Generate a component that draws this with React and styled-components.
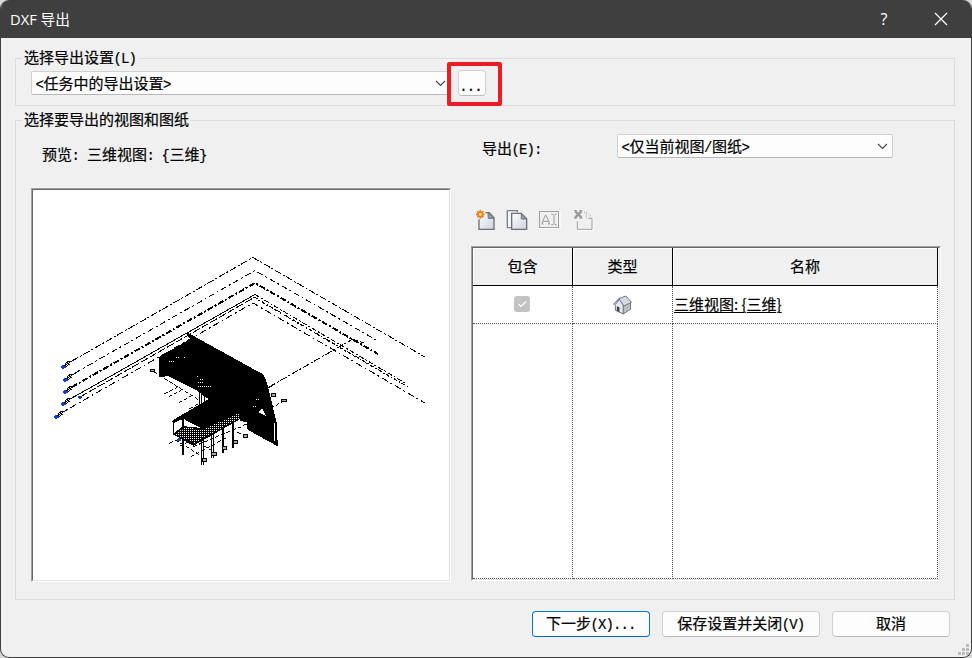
import React from 'react';
import styled, { createGlobalStyle } from 'styled-components';

const GlobalStyle = createGlobalStyle`
  *, *::before, *::after { box-sizing: border-box; }
  body { margin: 0; background: #d8d8d8; overflow: hidden; }
`;

const Window = styled.div`
  width: 972px;
  height: 658px;
  display: flex;
  flex-direction: column;
  position: relative;
  background: #f0f0f0;
  border: 1px solid #3f3f3f;
  border-top: 0;
  border-radius: 9px;
  overflow: hidden;
  color: #000;
  font: 15px/17px 'Noto Sans CJK SC', sans-serif;
  -webkit-text-stroke: 0.2px;
  white-space: pre;
`;

const TitleBar = styled.header`
  flex: none;
  height: 38px;
  display: flex;
  align-items: center;
  padding: 0 23px 0 9px;
  background: #3f3f3f;
  color: #fff;
  font: 14px/20px 'Open Sans', 'Noto Sans CJK SC', sans-serif;
  -webkit-text-stroke: 0;
`;

const Title = styled.span`
  flex: 1;
  padding-bottom: 1px;
  font-size: 14.7px;
`;

const TitleButton = styled.button`
  display: flex;
  justify-content: center;
  width: 14px;
  margin-left: ${p => p.$gap || 0}px;
  padding: 0;
  border: 0;
  background: none;
  color: #fff;
  font: 16px/20px 'Open Sans', sans-serif;
`;

const Content = styled.main`
  display: flex;
  flex-direction: column;
  padding: 12px 16px 0 14px;
`;

const Group = styled.fieldset`
  width: 940px;
  height: ${p => p.$height}px;
  min-width: 0;
  margin: 0 0 ${p => p.$gap}px;
  padding: 0 0 0 15px;
  border: 1px solid #dcdcdc;
`;

const Legend = styled.legend`
  height: 17px;
  margin-left: -9px;
  padding: 0 2px;
  line-height: 14px;
`;

const Ascii = styled.span`
  margin: 0 0.5px 0 -0.5px;
  font-family: 'Liberation Mono', monospace;
  font-size: 14px;
  letter-spacing: -0.9px;
  line-height: 1;
`;

const SettingRow = styled.div`
  display: flex;
  align-items: flex-start;
  padding-top: 4px;
`;

const Select = styled.div`
  width: ${p => p.$width}px;
  height: 24px;
  display: flex;
  align-items: center;
  justify-content: space-between;
  padding: 0 4px 0 4px;
  background: #fdfdfd;
  border: 1px solid #d0d0d0;
  border-bottom-color: #b8b8b8;
  border-radius: 2px;
`;

const Highlight = styled.div`
  position: relative;
  margin: 0 0 0 7px;
  &::after {
    content: '';
    position: absolute;
    left: -11px;
    top: -9px;
    width: 55px;
    height: 44px;
    border: 4px solid #ed1c24;
    border-radius: 2px;
    background: linear-gradient(#f0f0f0, #f0f0f0) 0 0 / 3px 100% no-repeat;
  }
`;

const Button = styled.button`
  width: ${p => p.$width}px;
  height: 26px;
  display: flex;
  align-items: center;
  justify-content: center;
  padding: 0 0 3px;
  background: #fdfdfd;
  border: 1px solid ${p => (p.$primary ? '#0078d4' : '#d0d0d0')};
  border-bottom-color: ${p => (p.$primary ? '#0067c0' : '#bcbcbc')};
  border-radius: 4px;
  color: #000;
  font: inherit;
  white-space: pre;
`;

const MoreButton = styled(Button)`
  margin-top: -1px;
  padding: 4px 2px 0 0;
`;

const Columns = styled.div`
  display: flex;
  gap: 20px;
`;

const PreviewPane = styled.section`
  width: 420px;
`;

const PreviewLabel = styled.div`
  height: 59px;
  padding: 16px 0 0 11px;
`;

const Sunken = styled.div`
  border: 1px solid;
  border-color: #a0a0a0 #fff #fff #a0a0a0;
  background: #fff;
`;

const SunkenInner = styled.div`
  height: ${p => p.$height}px;
  border: 1px solid;
  border-color: #696969 #e3e3e3 #e3e3e3 #696969;
  svg { display: block; }
`;

const ViewPane = styled.section`
  width: 470px;
`;

const ExportRow = styled.div`
  display: flex;
  align-items: flex-start;
  height: 79px;
  padding: 5px 0 0 11px;
`;

const ExportLabel = styled.label`
  width: 135px;
  padding-top: 5px;
`;

const Toolbar = styled.div`
  display: flex;
  gap: 10px;
  height: 38px;
  padding-left: 4px;
`;

const Grid = styled.div`
  display: grid;
  grid-template-columns: 100px 100px 265px;
  grid-template-rows: 38px 38px 255px;
`;

const HeaderCell = styled.div`
  display: flex;
  align-items: center;
  justify-content: center;
  padding-bottom: 2px;
  background: #f0f0f0;
  border-right: 1px solid #000;
  border-bottom: 1px solid #000;
  box-shadow: inset 1px 1px #fff;
`;

const Cell = styled.div`
  display: flex;
  align-items: center;
  justify-content: ${p => (p.$start ? 'flex-start' : 'center')};
  padding-left: ${p => (p.$start ? 1 : 0)}px;
  border-right: 1px dotted #555;
  border-bottom: 1px dotted #555;
`;

const ViewName = styled.span`
  padding-bottom: 2px;
  text-decoration: underline;
  text-decoration-thickness: 1px;
  text-underline-offset: 2px;
`;

const Checkbox = styled.span`
  width: 16px;
  height: 16px;
  margin-right: 1px;
  margin-bottom: 1px;
  border-radius: 3px;
  background: #c3c3c3;
  svg { display: block; }
`;

const Footer = styled.footer`
  display: flex;
  gap: 12px;
  padding-left: 517px;
`;

const Grip = styled.svg`
  position: absolute;
  right: 1px;
  bottom: 1px;
`;

// Half-width runs are set in a monospaced face, half the width of a Han character.
const Mixed = ({ children }) => (
  <span>
    {children.split(/([\x20-\x7e]+)/).map((part, i) =>
      i % 2 ? <Ascii key={i}>{part}</Ascii> : part
    )}
  </span>
);

const Chevron = () => (
  <svg width="11" height="7" viewBox="0 0 11 7" fill="none" stroke="#444" strokeWidth="1.1">
    <path d="M1 1l4.5 4.5L10 1" />
  </svg>
);

const ToolIcon = ({ x, children }) => (
  <svg width="22" height="23" viewBox={`${x} 39 66 69`} overflow="visible" fill="none">
    {children}
  </svg>
);

const NewIcon = () => (
  <ToolIcon x={45}>
    <defs>
      <linearGradient id="sheet" x2="1" y2="1">
        <stop stopColor="#fff" />
        <stop offset="1" stopColor="#ccd1dc" />
      </linearGradient>
    </defs>
    <path d="M57 73V103H102V68L88 53H76" fill="url(#sheet)" stroke="#6b7079" strokeWidth="4" />
    <path d="M84 53L102 70H85Z" fill="#9da3ae" stroke="#6b7079" strokeWidth="3" />
    <g stroke="#ed7c1b" strokeWidth="5">
      <path d="M61 45V71M48 58H74M52 49L70 67M70 49L52 67" />
      <circle cx="61" cy="58" r="7" fill="#fff1b0" />
    </g>
  </ToolIcon>
);

const CopyIcon = () => (
  <ToolIcon x={141}>
    <path d="M172 52V47H142V98H155" fill="#f2f4f7" stroke="#7b8088" strokeWidth="4" />
    <path d="M155 55H184L200 71V103H155Z" fill="url(#sheet)" stroke="#6b7079" strokeWidth="4" />
    <path d="M184 56V72H200Z" fill="#9da3ae" stroke="#6b7079" strokeWidth="3" />
  </ToolIcon>
);

const RenameIcon = () => (
  <ToolIcon x={237}>
    <path d="M240 100H300V51" stroke="#fff" strokeWidth="3" />
    <rect x="238.5" y="49.500" width="57" height="48" stroke="#a0a0a0" strokeWidth="3" />
    <path d="M247 87V81L256 61H258L267 81V87M250 79H264M244 87H250M264 87H270" stroke="#999" strokeWidth="3" />
    <path d="M274 58H280M284 58H290M282 60V87M274 89H280M284 89H290" stroke="#999" strokeWidth="3" />
  </ToolIcon>
);

const DeleteIcon = () => (
  <ToolIcon x={333}>
    <path d="M354 106H399V72" stroke="#fff" strokeWidth="3" />
    <path d="M352 79V103H396V70H385" stroke="#a0a0a0" strokeWidth="3" />
    <path d="M372 52H384M379 56V70M386 58L394 65" stroke="#a0a0a0" strokeWidth="3" strokeDasharray="3 3" />
    <path d="M346 49L364 67M364 49L346 67" stroke="#999" strokeWidth="7" />
    <path d="M342 47H350M359 47H367M342 69H350M359 69H367" stroke="#999" strokeWidth="4" />
  </ToolIcon>
);

const HouseIcon = () => (
  <svg width="20" height="20" viewBox="459.500 299 60 60" strokeLinejoin="round">
    <path d="M466 328L480 312L491 331V356L467 345Z" fill="#e6e9ef" stroke="#6e7581" strokeWidth="3" />
    <path d="M490 331L512 320V342L490 356Z" fill="#b8bec9" stroke="#6e7581" strokeWidth="3" />
    <path d="M477 310L498 302L515 321L492 332Z" fill="#d5d9e1" stroke="#6e7581" strokeWidth="3" />
    <path d="M461 328L478 310" fill="none" stroke="#7a818d" strokeWidth="4" />
    <path d="M471 333L479 336V350L471 347Z" fill="#3f4650" />
  </svg>
);

const LEVEL_LINES = [
  { d: 'M72 361L253 257.500L425 357', dash: '7 2 2 2' },
  { d: 'M75 373L255 270.500L378 341', dash: '6 3 2 3' },
  { d: 'M72 387L255 283L378 354', dash: '6 2 2 2', w: 2 },
  { d: 'M72 398L255 294.500' },
  { d: 'M80 397L255 297', dash: '8 2' },
  { d: 'M255 294.500L405 383', dash: '5 2 2 2' },
  { d: 'M254 297L409 387.500', dash: '4 2 1 2' },
  { d: 'M258 300L392 378', dash: '2 3' },
  { d: 'M70 408L253 303L425 403', dash: '7 3 2 3' },
  { d: 'M269 387L353 339L364 343', dash: '7 2 2 2' },
];

const MARKERS = [[63, 367], [65, 380], [65, 392], [63, 404], [56, 417]];
const POSTS = [[70, 275, 312], [100, 260, 374], [132, 300, 351], [154, 292, 404], [160, 292, 404], [184, 310, 385], [190, 310, 385], [219, 290, 370], [249, 272, 353]];
const BUBBLES = [[163, 390], [192, 372], [223, 354], [256, 337], [286, 319], [370, 196], [402, 212], [7, 122]];

const ModelDrawing = () => (
  <svg width="416" height="390" viewBox="33 190 416 390" shapeRendering="crispEdges" fill="none" stroke="#000">
    <defs>
      <pattern id="lattice" width="4" height="4" patternUnits="userSpaceOnUse">
        <path d="M0 0H1V1H0ZM2 2H3V3H2ZM2 0H3V1H2ZM0 2H1V3H0Z" fill="#fff" stroke="none" />
      </pattern>
    </defs>
    {LEVEL_LINES.map(({ d, dash, w }) => (
      <path key={d} d={d} strokeDasharray={dash} strokeWidth={w || 1} />
    ))}
    {MARKERS.map(([x, y]) => (
      <g key={y}>
        <path d={`M${x + 1} ${y - 1}l11 -7M${x + 2} ${y - 3}l4 -3h3M${x + 2} ${y}l5 -3`} />
        <path d={`M${x - 2} ${y}h5M${x} ${y - 2}v4`} stroke="#0b41c8" strokeWidth="2" />
      </g>
    ))}
    <path d="M78 397h4M80 396v3" stroke="#0b41c8" strokeWidth="2" />
    <g transform="translate(150 330) scale(.33333)" strokeWidth="3">
      <path d="M12 126L150 212M42 192L80 173M56 201L98 178M86 218L135 192M118 236L145 222M76 330L150 375M58 340L76 330M90 348L124 332M100 310L190 365M130 350L290 282M122 380L235 320M355 174L374 163M362 236L402 212M262 306L286 319" strokeDasharray="12 6" />
      <path d="M148 180V226M155 180V226M163 190V226" />
      <path d="M110 8L340 135L350 160L378 276L382 347L293 298V275L272 272L268 245L160 297L100 265L70 278L68 272L178 208L140 180L50 135L42 141L28 138L30 80L122 28Z" fill="#000" />
      <path d="M70 312L100 290L160 295L268 245L275 263L130 346Z" fill="#000" />
      <path d="M78 276L98 268V283L78 299Z" fill="#fff" stroke="none" />
      <path d="M104 272L152 294L105 287Z" fill="#fff" stroke="none" />
      {POSTS.map(([x, a, b]) => (
        <path key={x} d={`M${x} ${a}V${b}`} strokeWidth={x === 100 || x > 200 ? 6 : 3} />
      ))}
      <path d="M373 279V334" stroke="#fff" />
      <path d="M325 247L337 236L348 258L336 252Z" fill="#fff" stroke="none" />
      <path d="M58 94H76M79 83H89M103 84H107M145 158H162M145 169H184M141 139H145M151 148H162M309 229H319M319 208H331" stroke="#fff" strokeDasharray="3 3" />
      {BUBBLES.map(([x, y]) => (
        <rect key={x} x={x - 6} y={y - 4} width="13" height="8" fill="#aaa" />
      ))}
      <path d="M82 329H92M88 324V334" stroke="#0b41c8" strokeWidth="6" />
    </g>
    <path d="M175 434L185 427L203 430L238 413L240 418L194 443Z" fill="url(#lattice)" stroke="none" />
  </svg>
);

export default function App() {
  return (
    <>
      <GlobalStyle />
      <Window>
        <TitleBar>
          <Title>DXF 导出</Title>
          <TitleButton aria-label="Help">?</TitleButton>
          <TitleButton aria-label="Close" $gap={43}>
            <svg width="14" height="14" viewBox="0 0 14 14" stroke="#fff" strokeWidth="1.2">
              <path d="M1 1l12 12M13 1L1 13" />
            </svg>
          </TitleButton>
        </TitleBar>
        <Content>
          <Group $height={56} $gap={6}>
            <Legend><Mixed>选择导出设置(L)</Mixed></Legend>
            <SettingRow>
              <Select $width={420}>
                <Mixed>{'<任务中的导出设置>'}</Mixed>
                <Chevron />
              </Select>
              <Highlight>
                <MoreButton $width={28}><Mixed>...</Mixed></MoreButton>
              </Highlight>
            </SettingRow>
          </Group>
          <Group $height={488} $gap={11}>
            <Legend>选择要导出的视图和图纸</Legend>
            <Columns>
              <PreviewPane>
                <PreviewLabel><Mixed>{'预览: 三维视图: {三维}'}</Mixed></PreviewLabel>
                <Sunken>
                  <SunkenInner $height={392}><ModelDrawing /></SunkenInner>
                </Sunken>
              </PreviewPane>
              <ViewPane>
                <ExportRow>
                  <ExportLabel><Mixed>导出(E):</Mixed></ExportLabel>
                  <Select $width={276}>
                    <Mixed>{'<仅当前视图/图纸>'}</Mixed>
                    <Chevron />
                  </Select>
                </ExportRow>
                <Toolbar>
                  <NewIcon />
                  <CopyIcon />
                  <RenameIcon />
                  <DeleteIcon />
                </Toolbar>
                <Sunken>
                  <SunkenInner $height={333}>
                    <Grid>
                      <HeaderCell>包含</HeaderCell>
                      <HeaderCell>类型</HeaderCell>
                      <HeaderCell>名称</HeaderCell>
                      <Cell>
                        <Checkbox>
                          <svg width="16" height="16" viewBox="0 0 16 16" fill="none" stroke="#fff" strokeWidth="1.2">
                            <path d="M4.500 8l2.500 2.500 5-5" />
                          </svg>
                        </Checkbox>
                      </Cell>
                      <Cell><HouseIcon /></Cell>
                      <Cell $start><ViewName>{'三维视图: {三维}'}</ViewName></Cell>
                      <Cell />
                      <Cell />
                      <Cell />
                    </Grid>
                  </SunkenInner>
                </Sunken>
              </ViewPane>
            </Columns>
          </Group>
          <Footer>
            <Button $width={118} $primary><Mixed>下一步(X)...</Mixed></Button>
            <Button $width={158}><Mixed>保存设置并关闭(V)</Mixed></Button>
            <Button $width={118}>取消</Button>
          </Footer>
        </Content>
        <Grip width="12" height="12" viewBox="0 0 12 12" fill="#bdbdbd">
          <path d="M8 0h3v3H8zM4 4h3v3H4zM8 4h3v3H8zM0 8h3v3H0zM4 8h3v3H4zM8 8h3v3H8z" />
        </Grip>
      </Window>
    </>
  );
}
